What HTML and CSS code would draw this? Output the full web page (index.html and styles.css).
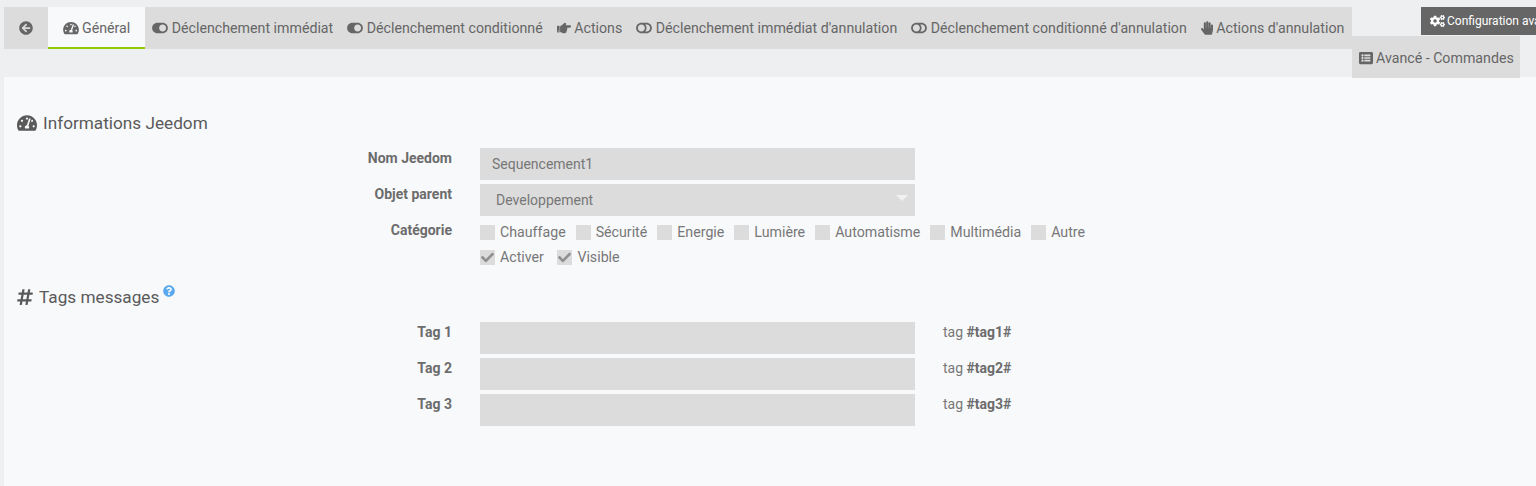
FILE: index.html
```html
<!DOCTYPE html>
<html lang="fr">
<head>
<meta charset="utf-8">
<title>Sequencement1</title>
<link rel="stylesheet" href="styles.css">
</head>
<body>
<svg class="defs" aria-hidden="true">
  <symbol id="i-back" viewBox="0 0 512 512"><path d="M256 504C119 504 8 393 8 256S119 8 256 8s248 111 248 248-111 248-248 248zm28.9-143.6L209.4 288H392c13.3 0 24-10.7 24-24v-16c0-13.3-10.7-24-24-24H209.4l75.5-72.4c9.7-9.3 9.9-24.8.4-34.3l-11-10.9c-9.4-9.4-24.6-9.4-33.9 0L107.7 239c-9.4 9.4-9.4 24.6 0 33.9l132.7 132.7c9.4 9.4 24.6 9.4 33.9 0l11-10.9c9.5-9.5 9.3-25-.4-34.3z"/></symbol>
  <symbol id="i-gauge" viewBox="0 0 576 512"><path d="M288 32C128.94 32 0 160.94 0 320c0 52.8 14.25 102.26 39.06 144.8 5.61 9.62 16.3 15.2 27.44 15.2h443c11.14 0 21.83-5.58 27.44-15.2C561.75 422.26 576 372.8 576 320c0-159.06-128.94-288-288-288zm0 64c14.71 0 26.58 10.13 30.32 23.65-1.11 2.26-2.64 4.23-3.45 6.67l-9.22 27.67c-5.13 3.49-10.97 6.01-17.64 6.01-17.67 0-32-14.33-32-32S270.33 96 288 96zM96 384c-17.67 0-32-14.33-32-32s14.33-32 32-32 32 14.33 32 32-14.33 32-32 32zm48-160c-17.67 0-32-14.33-32-32s14.33-32 32-32 32 14.33 32 32-14.33 32-32 32zm246.77-72.41l-61.33 184C343.13 347.33 352 364.54 352 384c0 11.72-3.38 22.55-8.88 32H232.88c-5.5-9.45-8.88-20.28-8.88-32 0-33.94 26.5-61.43 59.9-63.59l61.34-184.01c4.17-12.56 17.73-19.45 30.36-15.17 12.57 4.19 19.35 17.79 15.17 30.36zm14.66 57.2l15.52-46.55c3.47-1.29 7.13-2.23 11.05-2.23 17.67 0 32 14.33 32 32s-14.33 32-32 32c-11.38-.01-20.89-6.28-26.57-15.22zM480 384c-17.67 0-32-14.33-32-32s14.33-32 32-32 32 14.33 32 32-14.33 32-32 32z"/></symbol>
  <symbol id="i-on" viewBox="0 0 576 512"><path d="M384 64H192C86 64 0 150 0 256s86 192 192 192h192c106 0 192-86 192-192S490 64 384 64zm0 320c-70.8 0-128-57.3-128-128 0-70.8 57.3-128 128-128 70.8 0 128 57.3 128 128 0 70.8-57.3 128-128 128z"/></symbol>
  <symbol id="i-off" viewBox="0 0 576 512"><path d="M384 64H192C85.961 64 0 149.961 0 256s85.961 192 192 192h192c106.039 0 192-85.961 192-192S490.039 64 384 64zM64 256c0-70.741 57.249-128 128-128 70.741 0 128 57.249 128 128 0 70.741-57.249 128-128 128-70.741 0-128-57.249-128-128zm320 128h-48.905c65.217-72.858 65.236-183.12 0-256H384c70.741 0 128 57.249 128 128 0 70.741-57.249 128-128 128z"/></symbol>
  <symbol id="i-point" viewBox="0 0 512 512"><path d="M512 199.652c0 23.625-20.65 43.826-44.8 43.826h-99.851c16.34 17.048 18.346 49.766-6.299 70.944 14.288 22.829 2.147 53.017-16.45 62.315C353.574 425.878 322.654 448 272 448c-2.746 0-13.276-.203-16-.195-61.971.168-76.894-31.065-123.731-38.315C120.596 407.683 112 397.599 112 385.786V214.261l.002-.001c.011-18.366 10.607-35.889 28.464-43.845 28.886-12.994 95.413-49.038 107.534-77.323 7.797-18.194 21.384-29.084 40-29.092 34.222-.014 57.752 35.098 44.119 66.908-3.583 8.359-8.312 16.67-14.153 24.918H467.2c23.45 0 44.8 20.543 44.8 43.826zM96 200v192c0 13.255-10.745 24-24 24H24c-13.255 0-24-10.745-24-24V200c0-13.255 10.745-24 24-24h48c13.255 0 24 10.745 24 24zM68 368c0-11.046-8.954-20-20-20s-20 8.954-20 20 8.954 20 20 20 20-8.954 20-20z"/></symbol>
  <symbol id="i-hand" viewBox="0 0 448 512"><path d="M408.781 128.007C386.356 127.578 368 146.36 368 168.79V256h-8V79.79c0-22.43-18.356-41.212-40.781-40.783C297.488 39.423 280 57.169 280 79v177h-8V40.79C272 18.36 253.644-.422 231.219.007 209.488.423 192 18.169 192 40v216h-8V80.79c0-22.43-18.356-41.212-40.781-40.783C121.488 40.423 104 58.169 104 80v235.992l-31.648-43.519c-12.993-17.866-38.009-21.817-55.877-8.823-17.865 12.994-21.815 38.01-8.822 55.877l125.601 172.705A48 48 0 0 0 172.073 512h197.59c22.274 0 41.622-15.324 46.724-37.006l26.508-112.66a192.011 192.011 0 0 0 5.104-43.975V168c.001-22.431-18.355-41.695-40.218-39.993z"/></symbol>
  <symbol id="i-cogs" viewBox="0 0 640 512"><path d="M512.1 191l-8.2 14.3c-3 5.3-9.4 7.5-15.1 5.4-11.8-4.4-22.6-10.7-32.1-18.6-4.6-3.8-5.8-10.5-2.8-15.7l8.2-14.3c-6.9-8-12.3-17.3-15.9-27.4h-16.5c-6 0-11.2-4.3-12.2-10.3-2-12-2.1-24.6 0-37.1 1-6 6.2-10.4 12.2-10.4h16.5c3.6-10.1 9-19.4 15.9-27.4l-8.2-14.3c-3-5.2-1.9-11.9 2.8-15.7 9.5-7.9 20.4-14.2 32.1-18.6 5.7-2.1 12.1.1 15.1 5.4l8.2 14.3c10.5-1.9 21.2-1.9 31.7 0L552 6.3c3-5.3 9.4-7.5 15.1-5.4 11.8 4.4 22.6 10.7 32.1 18.6 4.6 3.8 5.8 10.5 2.8 15.7l-8.2 14.3c6.9 8 12.3 17.3 15.9 27.4h16.5c6 0 11.2 4.3 12.2 10.3 2 12 2.1 24.6 0 37.1-1 6-6.2 10.4-12.2 10.4h-16.5c-3.6 10.1-9 19.4-15.9 27.4l8.2 14.3c3 5.2 1.9 11.9-2.8 15.7-9.5 7.9-20.4 14.2-32.1 18.6-5.7 2.1-12.1-.1-15.1-5.4l-8.2-14.3c-10.4 1.9-21.2 1.9-31.7 0zm-10.5-58.8c38.5 29.6 82.4-14.3 52.8-52.8-38.5-29.7-82.4 14.3-52.8 52.8zM386.3 286.1l33.7 16.8c10.1 5.8 14.5 18.1 10.5 29.1-8.9 24.2-26.4 46.4-42.6 65.8-7.4 8.9-20.2 11.1-30.3 5.3l-29.1-16.8c-16 13.7-34.6 24.6-54.9 31.7v33.6c0 11.6-8.3 21.6-19.7 23.6-24.6 4.2-50.4 4.4-75.9 0-11.5-2-20-11.9-20-23.6V418c-20.3-7.2-38.9-18-54.9-31.7L74 403c-10 5.8-22.9 3.6-30.3-5.3-16.2-19.4-33.3-41.6-42.2-65.7-4-10.9.4-23.2 10.5-29.1l33.3-16.8c-3.9-20.9-3.9-42.4 0-63.4L12 205.8c-10.1-5.8-14.6-18.1-10.5-29 8.9-24.2 26-46.4 42.2-65.8 7.4-8.9 20.2-11.1 30.3-5.3l29.1 16.8c16-13.7 34.6-24.6 54.9-31.7V57.1c0-11.5 8.2-21.5 19.6-23.5 24.6-4.2 50.5-4.4 76-.1 11.5 2 20 11.9 20 23.6v33.6c20.3 7.2 38.9 18 54.9 31.7l29.1-16.8c10-5.8 22.9-3.6 30.3 5.3 16.2 19.4 33.2 41.6 42.1 65.8 4 10.9.1 23.2-10 29.1l-33.7 16.8c3.9 21 3.9 42.5 0 63.5zm-117.6 21.1c59.2-77-28.7-164.9-105.7-105.7-59.2 77 28.7 164.9 105.7 105.7zm243.4 182.7l-8.2 14.3c-3 5.3-9.4 7.5-15.1 5.4-11.8-4.4-22.6-10.7-32.1-18.6-4.6-3.8-5.8-10.5-2.8-15.7l8.2-14.3c-6.9-8-12.3-17.3-15.9-27.4h-16.5c-6 0-11.2-4.3-12.2-10.3-2-12-2.1-24.6 0-37.1 1-6 6.2-10.4 12.2-10.4h16.5c3.6-10.1 9-19.4 15.9-27.4l-8.2-14.3c-3-5.2-1.9-11.9 2.8-15.7 9.5-7.9 20.4-14.2 32.1-18.6 5.7-2.1 12.1.1 15.1 5.4l8.2 14.3c10.5-1.9 21.2-1.9 31.7 0l8.2-14.3c3-5.3 9.4-7.5 15.1-5.4 11.8 4.4 22.6 10.7 32.1 18.6 4.6 3.8 5.8 10.5 2.8 15.7l-8.2 14.3c6.9 8 12.3 17.3 15.9 27.4h16.5c6 0 11.2 4.3 12.2 10.3 2 12 2.1 24.6 0 37.1-1 6-6.2 10.4-12.2 10.4h-16.5c-3.6 10.1-9 19.4-15.9 27.4l8.2 14.3c3 5.2 1.9 11.9-2.8 15.7-9.5 7.9-20.4 14.2-32.1 18.6-5.7 2.1-12.1-.1-15.1-5.4l-8.2-14.3c-10.4 1.9-21.2 1.9-31.7 0zM501.6 431c38.5 29.6 82.4-14.3 52.8-52.8-38.5-29.6-82.4 14.3-52.8 52.8z"/></symbol>
  <symbol id="i-list" viewBox="0 0 512 512"><path d="M464 480H48c-26.51 0-48-21.49-48-48V80c0-26.51 21.49-48 48-48h416c26.51 0 48 21.49 48 48v352c0 26.51-21.49 48-48 48zM128 120c-22.091 0-40 17.909-40 40s17.909 40 40 40 40-17.909 40-40-17.909-40-40-40zm0 96c-22.091 0-40 17.909-40 40s17.909 40 40 40 40-17.909 40-40-17.909-40-40-40zm0 96c-22.091 0-40 17.909-40 40s17.909 40 40 40 40-17.909 40-40-17.909-40-40-40zm288-136v-32c0-6.627-5.373-12-12-12H204c-6.627 0-12 5.373-12 12v32c0 6.627 5.373 12 12 12h200c6.627 0 12-5.373 12-12zm0 96v-32c0-6.627-5.373-12-12-12H204c-6.627 0-12 5.373-12 12v32c0 6.627 5.373 12 12 12h200c6.627 0 12-5.373 12-12zm0 96v-32c0-6.627-5.373-12-12-12H204c-6.627 0-12 5.373-12 12v32c0 6.627 5.373 12 12 12h200c6.627 0 12-5.373 12-12z"/></symbol>
  <symbol id="i-hash" viewBox="0 0 448 512"><path d="M440.667 182.109l7.143-40c1.313-7.355-4.342-14.109-11.813-14.109h-74.81l14.623-81.891C377.123 38.754 371.468 32 363.997 32h-40.632a12 12 0 0 0-11.813 9.891L296.175 128H197.54l14.623-81.891C213.477 38.754 207.822 32 200.35 32h-40.632a12 12 0 0 0-11.813 9.891L132.528 128H53.432a12 12 0 0 0-11.813 9.891l-7.143 40C33.163 185.246 38.818 192 46.289 192h74.81L98.242 320H19.146a12 12 0 0 0-11.813 9.891l-7.143 40C-1.123 377.246 4.532 384 12.003 384h74.81L72.19 465.891C70.877 473.246 76.532 480 84.003 480h40.632a12 12 0 0 0 11.813-9.891L151.826 384h98.634l-14.623 81.891C234.523 473.246 240.178 480 247.65 480h40.632a12 12 0 0 0 11.813-9.891L315.472 384h79.096a12 12 0 0 0 11.813-9.891l7.143-40c1.313-7.355-4.342-14.109-11.813-14.109h-74.81l22.857-128h79.096a12 12 0 0 0 11.813-9.891zM261.889 320h-98.634l22.857-128h98.634l-22.857 128z"/></symbol>
  <symbol id="i-help" viewBox="0 0 512 512"><path d="M504 256c0 136.997-111.043 248-248 248S8 392.997 8 256C8 119.083 119.043 8 256 8s248 111.083 248 248zM262.655 90c-54.497 0-89.255 22.957-116.549 63.758-3.536 5.286-2.353 12.415 2.715 16.258l34.699 26.31c5.205 3.947 12.621 3.008 16.665-2.122 17.864-22.658 30.113-35.797 57.303-35.797 20.429 0 45.698 13.148 45.698 32.958 0 14.976-12.363 22.667-32.534 33.976C247.128 238.528 216 254.941 216 296v4c0 6.627 5.373 12 12 12h56c6.627 0 12-5.373 12-12v-1.333c0-28.462 83.186-29.647 83.186-106.667 0-58.002-60.165-102-116.531-102zM256 338c-25.365 0-46 20.635-46 46 0 25.364 20.635 46 46 46s46-20.636 46-46c0-25.365-20.635-46-46-46z"/></symbol>
  <symbol id="i-check" viewBox="0 0 512 512"><path d="M173.898 439.404l-166.4-166.4c-9.997-9.997-9.997-26.206 0-36.204l36.203-36.204c9.997-9.998 26.207-9.998 36.204 0L192 312.69 432.095 72.596c9.997-9.997 26.207-9.997 36.204 0l36.203 36.204c9.997 9.997 9.997 26.206 0 36.204l-294.4 294.401c-9.998 9.997-26.207 9.997-36.204-.001z"/></symbol>
</svg>

<header class="head">
  <nav class="tabs">
    <a class="tab tab-wide"><svg class="ic w14"><use href="#i-back"/></svg></a>
    <a class="tab tab-wide tab-active"><svg class="ic w16"><use href="#i-gauge"/></svg>Général</a>
    <a class="tab"><svg class="ic w16"><use href="#i-on"/></svg>Déclenchement immédiat</a>
    <a class="tab"><svg class="ic w16"><use href="#i-on"/></svg>Déclenchement conditionné</a>
    <a class="tab"><svg class="ic w14"><use href="#i-point"/></svg>Actions</a>
    <a class="tab"><svg class="ic w16"><use href="#i-off"/></svg>Déclenchement immédiat d'annulation</a>
    <a class="tab"><svg class="ic w16"><use href="#i-off"/></svg>Déclenchement conditionné d'annulation</a>
    <a class="tab"><svg class="ic w12"><use href="#i-hand"/></svg>Actions d'annulation</a>
  </nav>
  <div class="side">
    <a class="config"><svg class="ic w15"><use href="#i-cogs"/></svg>Configuration avancée</a>
    <a class="tab tab-adv"><svg class="ic w14"><use href="#i-list"/></svg>Avancé - Commandes</a>
  </div>
</header>

<main class="panel">
  <h3 class="title title-info"><svg class="ic t-gauge"><use href="#i-gauge"/></svg>Informations Jeedom</h3>
  <div class="form">
    <label class="lbl">Nom Jeedom</label>
    <div class="field">Sequencement1</div>
    <label class="lbl">Objet parent</label>
    <div class="field field-select">Developpement<span class="caret"></span></div>
    <label class="lbl lbl-check">Catégorie</label>
    <div class="checks">
      <span class="chk"><i class="box"></i>Chauffage</span>
      <span class="chk"><i class="box"></i>Sécurité</span>
      <span class="chk"><i class="box"></i>Energie</span>
      <span class="chk"><i class="box"></i>Lumière</span>
      <span class="chk"><i class="box"></i>Automatisme</span>
      <span class="chk"><i class="box"></i>Multimédia</span>
      <span class="chk"><i class="box"></i>Autre</span>
    </div>
    <span></span>
    <div class="checks checks-state">
      <span class="chk"><i class="box"><svg class="tick"><use href="#i-check"/></svg></i>Activer</span>
      <span class="chk"><i class="box"><svg class="tick"><use href="#i-check"/></svg></i>Visible</span>
    </div>
  </div>

  <h3 class="title title-tags"><svg class="ic t-hash"><use href="#i-hash"/></svg>Tags messages<sup class="help"><svg class="ic w12 blue"><use href="#i-help"/></svg></sup></h3>
  <div class="form">
    <label class="lbl">Tag 1</label>
    <div class="field"></div>
    <div class="hint">tag <b>#tag1#</b></div>
    <label class="lbl">Tag 2</label>
    <div class="field"></div>
    <div class="hint">tag <b>#tag2#</b></div>
    <label class="lbl">Tag 3</label>
    <div class="field"></div>
    <div class="hint">tag <b>#tag3#</b></div>
  </div>
</main>
</body>
</html>
```

FILE: styles.css
```css
* { box-sizing: border-box; }
html, body { margin: 0; height: 100%; overflow: hidden; }
body {
  background: #eeeff1;
  color: #666;
  font: 14px/20px Roboto, "Liberation Sans", sans-serif;
}
.defs { display: none; }
.ic { display: block; height: 14px; fill: currentColor; flex: none; }
.w12 { width: 12px; }
.w14 { width: 14px; }
.w15 { width: 15px; }
.w16 { width: 16px; }

.head {
  display: flex;
  align-items: flex-start;
  padding: 7px 0 0 4px;
}
.tabs { display: flex; width: 1348px; flex: none; background: #dcdcdc; }
.tab {
  display: flex;
  align-items: center;
  gap: 3.5px;
  height: 42px;
  padding: 0 7px;
  background: #dcdcdc;
  font-size: 14.2px;
  white-space: nowrap;
}
.tab-wide { padding: 0 15px; }
.tab-active {
  gap: 3px;
  background: #f8f9fb;
  border-bottom: 2px solid #94ca02;
  padding: 2px 15px 0;
}
.side { display: flex; flex-direction: column; flex: none; width: 184px; }
.config {
  display: flex;
  align-items: center;
  gap: 2px;
  align-self: flex-start;
  height: 28px;
  margin-left: 69px;
  padding: 0 9px;
  background: #666;
  color: #fff;
  font-size: 12px;
  white-space: nowrap;
}
.tab-adv {
  align-self: flex-start;
  gap: 3px;
  margin-top: 1px;
  padding: 1px 6px 0 7px;
  position: relative;
  z-index: 1;
}

.panel {
  margin: -1px 0 0 4px;
  height: 409px;
  padding: 33px 13px 0;
  background: #f8f9fb;
}
.title {
  display: flex;
  align-items: center;
  margin: 0;
  height: 26px;
  color: #5a5a5a;
  font-size: 17.2px;
  font-weight: 400;
}
.t-gauge { width: 20px; height: 18px; margin: -1px 6px 0 0; }
.t-hash { width: 16px; height: 18px; margin: 0 6px 0 0; }
.title-info { margin-bottom: 12px; }
.title-tags { margin-top: 12px; margin-bottom: 12px; }
.help { margin: -13px 0 0 4px; }
.blue { color: #5aa9ee; }

.form {
  display: grid;
  grid-template-columns: 435px 435px 1fr;
  column-gap: 28px;
  row-gap: 4px;
}
.lbl { grid-column: 1; text-align: right; font-weight: 700; color: #6c6c6c; }
.field {
  grid-column: 2;
  height: 32px;
  padding: 0 12px;
  background: #dcdcdc;
  color: #777;
  line-height: 32px;
}
.field-select { position: relative; padding-left: 16px; }
.caret {
  position: absolute;
  right: 7px;
  top: 11px;
  border: 6px solid transparent;
  border-top: 6px solid #f1f1f1;
  border-bottom: 0;
}
.hint { color: #777; }
.hint b { color: #6c6c6c; }
.checks {
  grid-column: 2 / 4;
  display: flex;
  gap: 10px;
  height: 22px;
  padding-top: 2px;
  color: #777;
  font-size: 14.2px;
}
.checks-state { gap: 13.5px; height: 26px; padding-top: 1px; }
.lbl-check { height: 22px; }
.chk { display: flex; align-items: center; gap: 5px; height: 20px; }
.box {
  display: flex;
  align-items: center;
  justify-content: center;
  width: 15px;
  height: 15px;
  background: #dcdcdc;
}
.tick { width: 13px; height: 13px; fill: #909090; }
```
